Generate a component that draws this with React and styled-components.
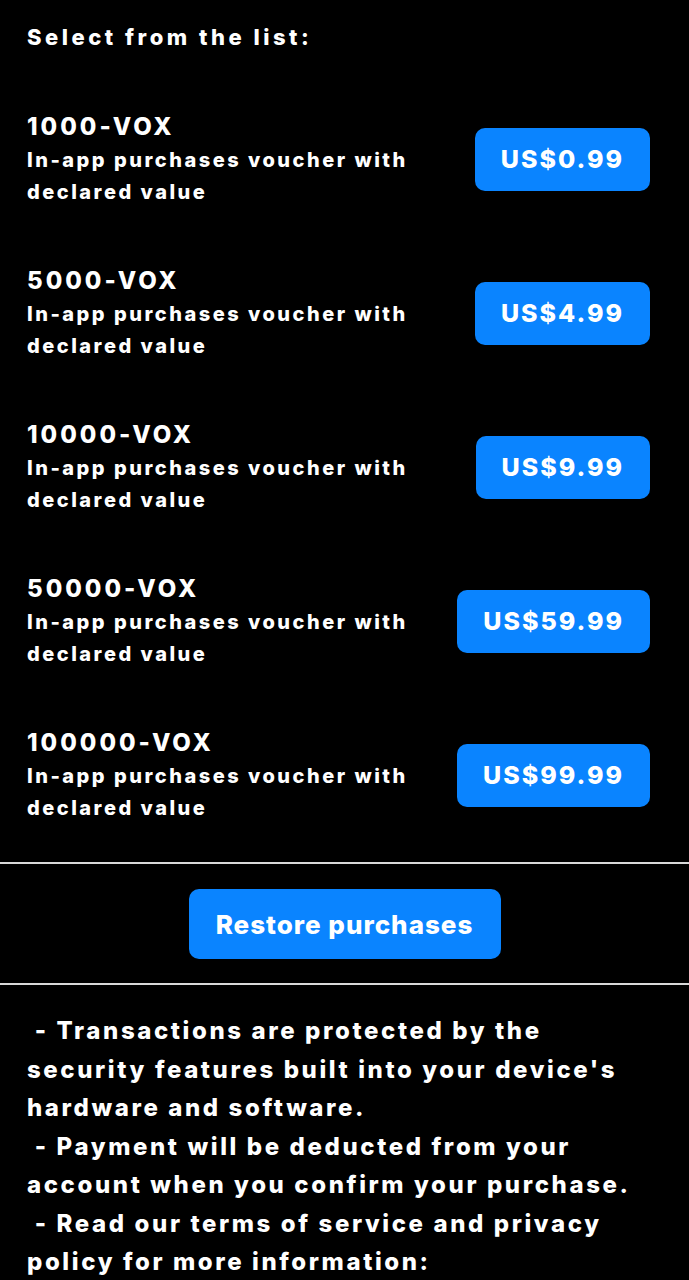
import React from "react";
import styled, { createGlobalStyle } from "styled-components";

const GlobalStyle = createGlobalStyle`
  html, body {
    margin: 0;
    padding: 0;
    background: #000;
  }
  body {
    font-family: Inter, "Noto Sans", "Liberation Sans", sans-serif;
    color: #fff;
    -webkit-font-smoothing: antialiased;
  }
`;

const products = [
  { id: "1000-VOX", price: "US$0.99" },
  { id: "5000-VOX", price: "US$4.99" },
  { id: "10000-VOX", price: "US$9.99" },
  { id: "50000-VOX", price: "US$59.99" },
  { id: "100000-VOX", price: "US$99.99" },
];

const notes = [
  " - Transactions are protected by the security features built into your device's hardware and software.",
  " - Payment will be deducted from your account when you confirm your purchase.",
  " - Read our terms of service and privacy policy for more information:",
];

export default function App() {
  return (
    <>
      <GlobalStyle />
      <Page>
        <Section>
          <Heading>Select from the list:</Heading>
          <List>
            {products.map((p) => (
              <Row key={p.id}>
                <Info>
                  <Title>{p.id}</Title>
                  <Desc>In-app purchases voucher with declared value</Desc>
                </Info>
                <PriceButton type="button">{p.price}</PriceButton>
              </Row>
            ))}
          </List>
        </Section>
        <Divider />
        <RestoreWrap>
          <RestoreButton type="button">Restore purchases</RestoreButton>
        </RestoreWrap>
        <Divider />
        <Notes>
          {notes.map((n, i) => (
            <Note key={i}>{n}</Note>
          ))}
        </Notes>
      </Page>
    </>
  );
}

const Page = styled.div`
  width: 689px;
  min-height: 1280px;
  background: #000;
  overflow: hidden;
`;

const Section = styled.div`
  padding: 22px 39px 38px 27px;
`;

const Heading = styled.h1`
  margin: 0;
  font-size: 22px;
  line-height: 30px;
  font-weight: 800;
  letter-spacing: 3.5px;
`;

const List = styled.div`
  display: flex;
  flex-direction: column;
  gap: 56px;
  margin-top: 58px;
`;

const Row = styled.div`
  display: flex;
  align-items: center;
  justify-content: space-between;
`;

const Info = styled.div`
  width: 405px;
`;

const Title = styled.div`
  font-size: 24px;
  line-height: 34px;
  font-weight: 800;
  letter-spacing: 3px;
`;

const Desc = styled.div`
  font-size: 20px;
  line-height: 32px;
  font-weight: 800;
  letter-spacing: 2.5px;
`;

const PriceButton = styled.button`
  height: 63px;
  padding: 0 26px;
  border: none;
  border-radius: 10px;
  background: #0a84ff;
  color: #fff;
  font-family: inherit;
  font-size: 25px;
  font-weight: 800;
  letter-spacing: 2px;
`;

const Divider = styled.hr`
  margin: 0;
  border: none;
  height: 2px;
  background: #d8d8d8;
`;

const RestoreWrap = styled.div`
  display: flex;
  justify-content: center;
  padding: 25px 0 24px;
`;

const RestoreButton = styled.button`
  width: 312px;
  height: 70px;
  border: none;
  border-radius: 10px;
  background: #0a84ff;
  color: #fff;
  font-family: inherit;
  font-size: 26px;
  font-weight: 800;
  letter-spacing: 1px;
`;

const Notes = styled.div`
  padding: 27px 39px 0 27px;
`;

const Note = styled.p`
  margin: 0;
  white-space: pre-wrap;
  font-size: 24px;
  line-height: 38.5px;
  font-weight: 800;
  letter-spacing: 2.6px;
`;
